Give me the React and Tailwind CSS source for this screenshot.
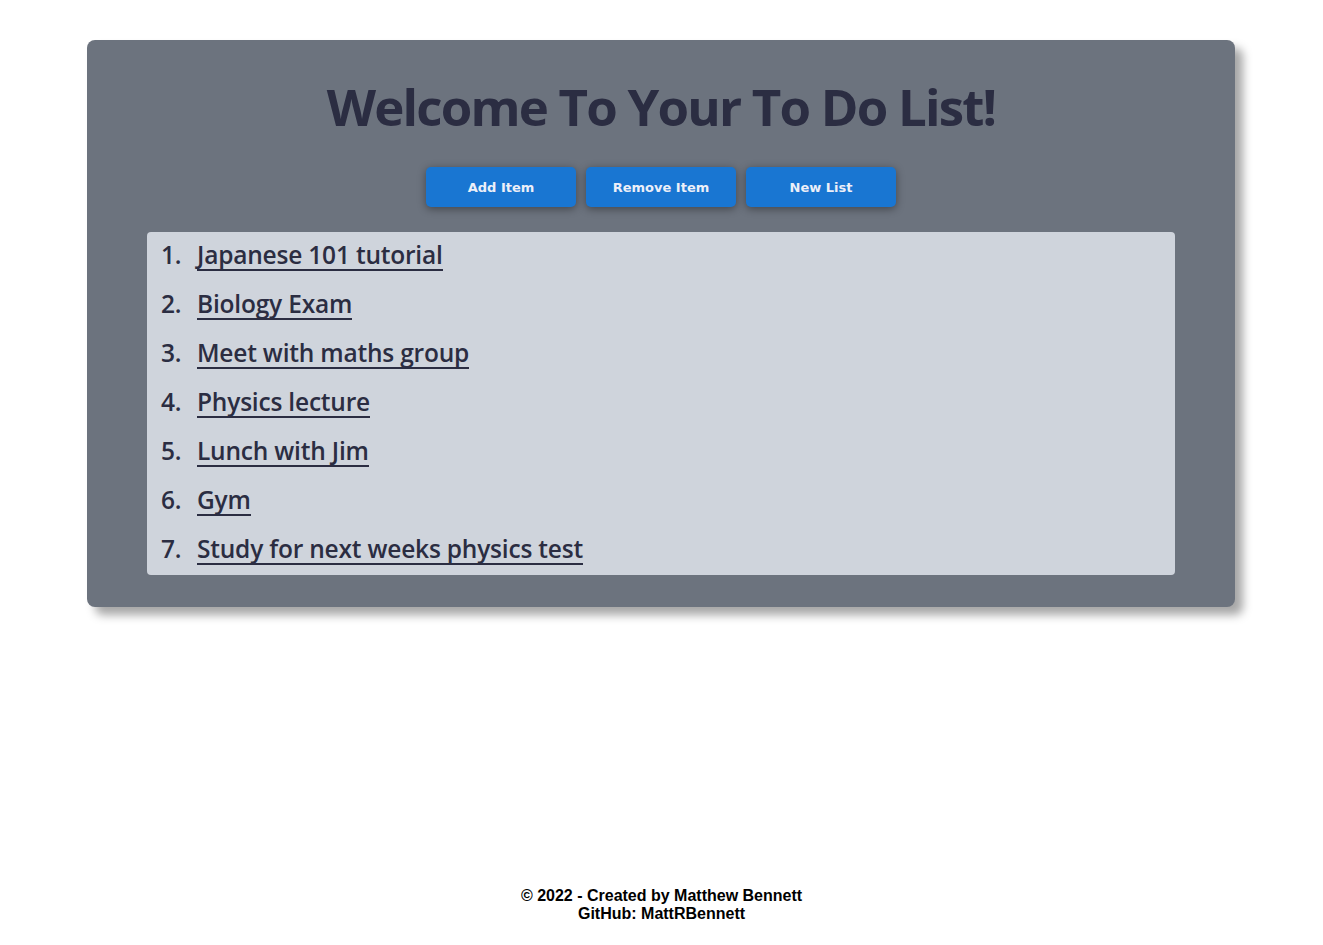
import React from "react";

const items = [
  "Japanese 101 tutorial",
  "Biology Exam",
  "Meet with maths group",
  "Physics lecture",
  "Lunch with Jim",
  "Gym",
  "Study for next weeks physics test",
];

// Main to do list page
export default function App() {
  return (
    <div className="min-h-[945px] bg-white flex flex-col">
      <div className="w-[1148px] ml-[87px] mt-10 bg-[#6c737e] rounded-lg shadow-[8px_8px_10px_rgba(0,0,0,0.35)] px-[60px] pt-[24px] pb-[32px]">
        <h1 className="text-center text-[#2b2d42] font-bold text-[51px] leading-[84px] tracking-[-1.8px] [font-family:'Open_Sans',sans-serif]">
          Welcome To Your To Do List!
        </h1>
        <div className="flex justify-center gap-[10px] mt-[19px]">
          {["Add Item", "Remove Item", "New List"].map((label) => (
            <button
              key={label}
              className="w-[150px] h-[40px] pt-[2px] rounded-[5px] bg-[#1976d2] text-[#eceff8] text-[13px] font-bold shadow-[0_2px_8px_rgba(0,0,0,0.4)] [font-family:Verdana,'DejaVu_Sans',sans-serif]"
            >
              {label}
            </button>
          ))}
        </div>
        <ol className="mt-[25px] bg-[#cfd4dc] rounded-[4px] pl-[14px] list-none [font-family:'Open_Sans',sans-serif] text-[#2b2d42]">
          {items.map((item, i) => (
            <li key={item} className="h-[49px] flex items-start pt-[8px] text-[24.5px] font-semibold tracking-[-0.2px]">
              <span className="w-[36px] leading-[30px]">{i + 1}.</span>
              <span className="leading-[29px] border-b-2 border-[#2b2d42]">{item}</span>
            </li>
          ))}
        </ol>
      </div>
      <footer className="mt-auto mb-[22px] text-center text-black font-bold text-[16px] leading-[18px] [font-family:'Liberation_Sans',Arial,sans-serif]">
        <p>© 2022 - Created by Matthew Bennett</p>
        <p>GitHub: MattRBennett</p>
      </footer>
    </div>
  );
}
